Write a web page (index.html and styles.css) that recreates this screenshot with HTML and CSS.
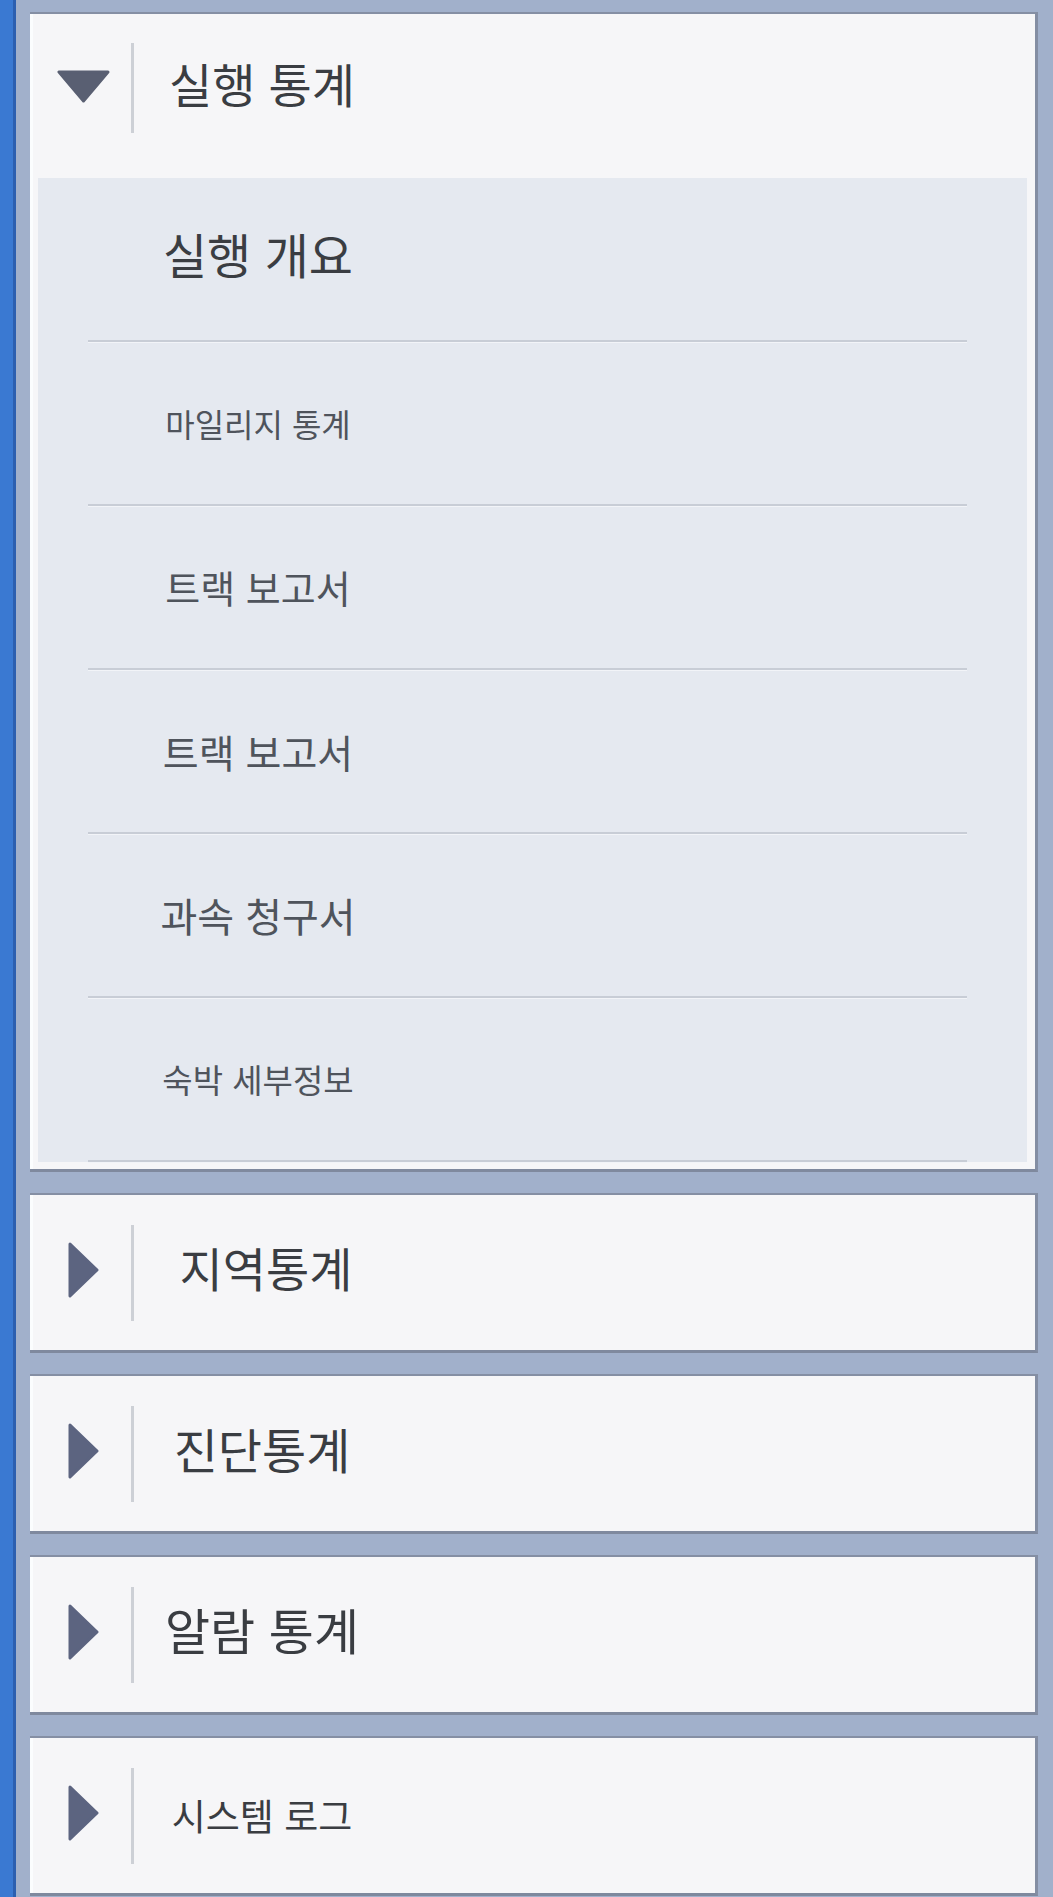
FILE: index.html
```html
<!DOCTYPE html>
<html lang="ko">
<head>
<meta charset="utf-8">
<title>통계 메뉴</title>
<link rel="stylesheet" href="styles.css">
</head>
<body>
<div class="app">
  <div class="rail"></div>
  <nav class="menu">
    <section class="group group-open">
      <div class="group-head">
        <span class="caret">
          <svg class="tri-down" width="55" height="33" viewBox="0 0 55 33"><path d="M3 2 L52 2 L27.5 31 Z" fill="#595f72" stroke="#595f72" stroke-width="3" stroke-linejoin="round"/></svg>
        </span>
        <span class="divider"></span>
        <span class="title fs-47 raise">실행 통계</span>
      </div>
      <ul class="sub">
        <li class="sub-item"><span class="label fs-48 strong raise">실행 개요</span></li>
        <li class="sub-item"><span class="label fs-32">마일리지 통계</span></li>
        <li class="sub-item"><span class="label fs-38">트랙 보고서</span></li>
        <li class="sub-item"><span class="label fs-39">트랙 보고서</span></li>
        <li class="sub-item"><span class="label fs-40">과속 청구서</span></li>
        <li class="sub-item"><span class="label fs-33">숙박 세부정보</span></li>
      </ul>
    </section>

    <section class="group">
      <div class="group-head">
        <span class="caret">
          <svg class="tri-right" width="31" height="58" viewBox="0 0 31 58"><path d="M2 3 L29 29 L2 55 Z" fill="#5c6480" stroke="#5c6480" stroke-width="3" stroke-linejoin="round"/></svg>
        </span>
        <span class="divider"></span>
        <span class="title fs-47 raise shift">지역통계</span>
      </div>
    </section>

    <section class="group">
      <div class="group-head">
        <span class="caret">
          <svg class="tri-right" width="31" height="58" viewBox="0 0 31 58"><path d="M2 3 L29 29 L2 55 Z" fill="#5c6480" stroke="#5c6480" stroke-width="3" stroke-linejoin="round"/></svg>
        </span>
        <span class="divider"></span>
        <span class="title fs-48 raise">진단통계</span>
      </div>
    </section>

    <section class="group">
      <div class="group-head">
        <span class="caret">
          <svg class="tri-right" width="31" height="58" viewBox="0 0 31 58"><path d="M2 3 L29 29 L2 55 Z" fill="#5c6480" stroke="#5c6480" stroke-width="3" stroke-linejoin="round"/></svg>
        </span>
        <span class="divider"></span>
        <span class="title fs-49 raise">알람 통계</span>
      </div>
    </section>

    <section class="group">
      <div class="group-head">
        <span class="caret">
          <svg class="tri-right" width="31" height="58" viewBox="0 0 31 58"><path d="M2 3 L29 29 L2 55 Z" fill="#5c6480" stroke="#5c6480" stroke-width="3" stroke-linejoin="round"/></svg>
        </span>
        <span class="divider"></span>
        <span class="title fs-37">시스템 로그</span>
      </div>
    </section>
  </nav>
</div>
</body>
</html>
```

FILE: styles.css
```css
* {
  box-sizing: border-box;
}

html, body {
  margin: 0;
  padding: 0;
}

body {
  background: #a1b0cb;
  font-family: "Noto Sans CJK KR", "Noto Sans", sans-serif;
  color: #3b3e44;
  overflow: hidden;
}

.app {
  display: flex;
  min-height: 1897px;
}

.rail {
  width: 16px;
  flex: none;
  background: #3a79d2;
  border-right: 3px solid #2c5fb0;
}

.menu {
  flex: 1;
  display: flex;
  flex-direction: column;
  gap: 21px;
  padding: 12px 15px 0 14px;
}

.group {
  background: #f6f6f8;
  border-top: 2px solid #858fa4;
  border-bottom: 3px solid #7f899e;
  border-right: 3px solid #848ea3;
  box-shadow: inset 3px 0 0 #fbfdfe;
}

.group-head {
  display: flex;
  align-items: center;
  height: 155px;
}

.group-open .group-head {
  height: 148px;
  margin-bottom: 16px;
}

.caret {
  width: 95px;
  margin-left: 6px;
  flex: none;
  display: flex;
  justify-content: center;
  align-items: center;
}

.tri-down {
  margin-top: -4px;
}

.tri-right {
  margin-top: -6px;
}

.divider {
  width: 3px;
  height: 96px;
  flex: none;
  background: #cdd0d6;
}

.group-open .divider {
  height: 90px;
}

.title {
  width: 256px;
  text-align: center;
  line-height: 1;
  white-space: nowrap;
  color: #3a3d42;
}

.title.shift {
  padding-left: 8px;
}

.raise {
  margin-bottom: 12px;
}

.sub {
  list-style: none;
  margin: 0 8px 7px 8px;
  padding: 0;
  background: #e5e9f0;
}

.sub-item {
  height: 164px;
  margin: 0 60px 0 50px;
  display: flex;
  align-items: center;
  border-bottom: 2px solid #c8cdd6;
  box-shadow: 0 1px 0 #f2f4f8;
}

.label {
  width: 256px;
  margin-left: 42px;
  text-align: center;
  line-height: 1;
  white-space: nowrap;
  color: #4f545c;
}

.label.strong {
  color: #3a3d42;
}

.fs-32 { font-size: 32px; }
.fs-33 { font-size: 33px; }
.fs-37 { font-size: 37px; }
.fs-38 { font-size: 38px; }
.fs-39 { font-size: 39px; }
.fs-40 { font-size: 40px; }
.fs-47 { font-size: 47px; }
.fs-48 { font-size: 48px; }
.fs-49 { font-size: 49px; }
```
